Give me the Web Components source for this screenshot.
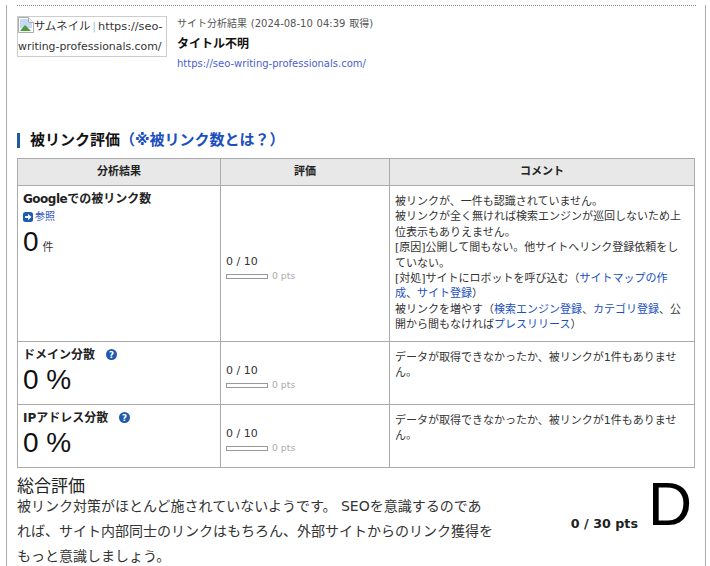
<!DOCTYPE html>
<html lang="ja"><head><meta charset="utf-8"><title>被リンク評価</title>
<style>
html,body{margin:0;padding:0;background:#fff;height:566px;overflow:hidden}
body{font-family:"DejaVu Sans","Noto Sans CJK JP",sans-serif;color:#222;font-size:11px}
a{color:#1a4fc0}
</style></head><body>
<report-page>
  <site-head></site-head>
  <section-title>被リンク評価<a slot="link">（※被リンク数とは？）</a></section-title>
  <score-table>
    <score-row>
      <span slot="name"><span style="letter-spacing:-.5px">Google</span>での被リンク数</span>
      <ref-link slot="ref">参照</ref-link>
      <span slot="value">0</span><span slot="unit">件</span>
      <span slot="comment">被リンクが、一件も認識されていません。<br>被リンクが全く無ければ検索エンジンが巡回しないため上位表示もありえません。<br>[原因]公開して間もない。他サイトへリンク登録依頼をしていない。<br>[対処]サイトにロボットを呼び込む（<a>サイトマップの作成</a>、<a>サイト登録</a>）<br>被リンクを増やす（<a>検索エンジン登録</a>、<a>カテゴリ登録</a>、公開から間もなければ<a>プレスリリース</a>）</span>
    </score-row>
    <score-row help h="62">
      <span slot="name">ドメイン分散</span>
      <span slot="value">0 %</span>
      <span slot="comment">データが取得できなかったか、被リンクが1件もありません。</span>
    </score-row>
    <score-row help h="62">
      <span slot="name">IPアドレス分散</span>
      <span slot="value">0 %</span>
      <span slot="comment">データが取得できなかったか、被リンクが1件もありません。</span>
    </score-row>
  </score-table>
  <total-summary></total-summary>
</report-page>
<script>
const def=(n,html)=>{customElements.define(n,class extends HTMLElement{constructor(){super();this.attachShadow({mode:'open'}).innerHTML=html}})};
def('report-page',`<style>:host{display:block;box-sizing:border-box;margin-left:6px;width:700px;height:566px;border-left:1px solid #aaa;border-right:1px solid #aaa;padding:0 9px 0 10px}</style><slot></slot>`);
def('site-head',`<style>
:host{display:block;border-top:1px dotted #888;margin-top:5px;padding-top:10px;height:120px;box-sizing:border-box}
.w{display:flex;gap:10px}
.th{box-sizing:border-box;width:150px;height:41px;border:1px solid #ccc;font-size:11.300px;line-height:20px;color:#333;overflow:hidden;white-space:nowrap}
.th svg{vertical-align:-3px}
.th b{font-weight:400;color:#9cc4e0;margin:0 2px}
.th span{font-size:10.900px}
.m{font-size:10px;color:#555;line-height:14px;padding-top:1px;word-spacing:.6px}
.t{font-weight:700;font-size:12px;color:#111;line-height:18px;margin-top:4px}
.u{color:#4a5fd0;font-size:10px;line-height:16px;margin-top:3px}
</style><div class="w"><div class="th"><svg width="16" height="16" viewBox="0 0 16 16"><path d="M.5.5h10l5 5v10H.5z" fill="#fff" stroke="#aaa"/><path d="M2 2h8v4h4v5H2z" fill="#c4daf2"/><path d="M2 14l5-6 6 6H2z" fill="#4f9a3a"/><path d="M10.500.5v5h5" fill="#eee" stroke="#aaa"/></svg>サムネイル<b>|</b>https://seo-<br><span>writing-professionals.com/</span></div><div><div class="m">サイト分析結果 (2024-08-10 04:39 取得)</div><div class="t">タイトル不明</div><div class="u">https://seo-writing-professionals.com/</div></div></div>`);
def('section-title',`<style>
:host{display:block;border-left:3px solid #1f5c9e;padding-left:10px;font-weight:700;font-size:15px;line-height:15px;color:#111;margin:8px 0 10px;height:15px;white-space:nowrap}
::slotted(a){color:#0b4cc4}
</style><slot></slot><slot name="link"></slot>`);
def('score-table',`<style>
:host{display:block;width:678px;box-sizing:border-box;border:1px solid #aaa;border-bottom:0}
.h{display:grid;grid-template-columns:202px 169px 1fr;height:26px;background:#e8e8e8;border-bottom:1px solid #aaa;font-weight:700;font-size:11px;text-align:center;line-height:26px;color:#222}
.h div+div{border-left:1px solid #aaa}
</style><div class="h"><div>分析結果</div><div>評価</div><div>コメント</div></div><slot></slot>`);
customElements.define('score-row',class extends HTMLElement{constructor(){super();
 const r=this.attachShadow({mode:'open'});
 const help=this.hasAttribute('help');const h=this.getAttribute('h')||'155';
 r.innerHTML=`<style>
:host{display:grid;grid-template-columns:202px 169px 1fr;grid-template-rows:${h}px;height:${h}px;border-bottom:1px solid #aaa}
.c{box-sizing:border-box;padding:5px;min-width:0;overflow:hidden}
.c+.c{border-left:1px solid #aaa}
.n{font-weight:700;font-size:12px;line-height:17px;color:#222;display:flex;align-items:center;gap:11px}
.n svg{margin-bottom:3px}
.v{font-family:"Liberation Sans",sans-serif;font-size:28px;line-height:34px;color:#111;margin-top:${help?'-1px':'1px'}}
.un{font-family:"DejaVu Sans","Noto Sans CJK JP",sans-serif;font-size:11px;margin-left:4px;color:#333;line-height:1}
.ev{display:flex;flex-direction:column;justify-content:${help?'flex-start':'center'};padding-top:${help?'22px':'15px'};color:#333;font-size:11px;line-height:14px}
.bar{display:flex;align-items:center;gap:4px;font-size:9.300px;color:#aaa;line-height:12px;margin-top:1px}
.bar i{display:block;width:42px;height:5px;box-sizing:border-box;border:1px solid #999;background:#fff}
.cm{font-size:11px;line-height:15.400px;color:#333;padding:8px 7px 5px 5px}
svg{flex:none}
</style>
<div class="c"><div class="n"><slot name="name"></slot>${help?`<svg width="11" height="11" viewBox="0 0 12 12"><circle cx="6" cy="6" r="6" fill="#1f5cb0"/><text x="6" y="9.500" text-anchor="middle" font-size="9.500" font-weight="700" fill="#fff" font-family="DejaVu Sans">?</text></svg>`:''}</div><slot name="ref"></slot><div class="v"><slot name="value"></slot><span class="un"><slot name="unit"></slot></span></div></div>
<div class="c ev"><div>0 / 10</div><div class="bar"><i></i>0 pts</div></div>
<div class="c cm"><slot name="comment"></slot></div>`;
}});
def('ref-link',`<style>:host{display:flex;align-items:center;gap:2px;color:#2a50c0;font-size:10px;line-height:14px;margin-top:2px}</style><svg width="10" height="10" viewBox="0 0 10 10"><rect width="10" height="10" rx="2.500" fill="#1f5cb0"/><path d="M2 4h3V2l3.500 3L5 8V6H2z" fill="#fff"/></svg><slot></slot>`);
def('total-summary',`<style>
:host{display:flex;justify-content:space-between;margin-top:8px;height:90px}
h2{margin:0;font-weight:400;font-size:17px;line-height:20px;color:#222}
p{margin:0;width:477px;font-size:14px;line-height:25.200px;color:#333;margin-top:-2px}
.s{display:flex;align-items:flex-start}
.p{font-weight:700;font-size:12.700px;color:#222;margin-top:40px;margin-right:10px}
.d{font-family:"Liberation Sans",sans-serif;font-size:61px;line-height:56px;color:#000;margin-right:4px}
</style><div><h2>総合評価</h2><p>被リンク対策がほとんど施されていないようです。 SEOを意識するのであれば、サイト内部同士のリンクはもちろん、外部サイトからのリンク獲得をもっと意識しましょう。</p></div><div class="s"><span class="p">0 / 30 pts</span><span class="d">D</span></div>`);
</script></body></html>
